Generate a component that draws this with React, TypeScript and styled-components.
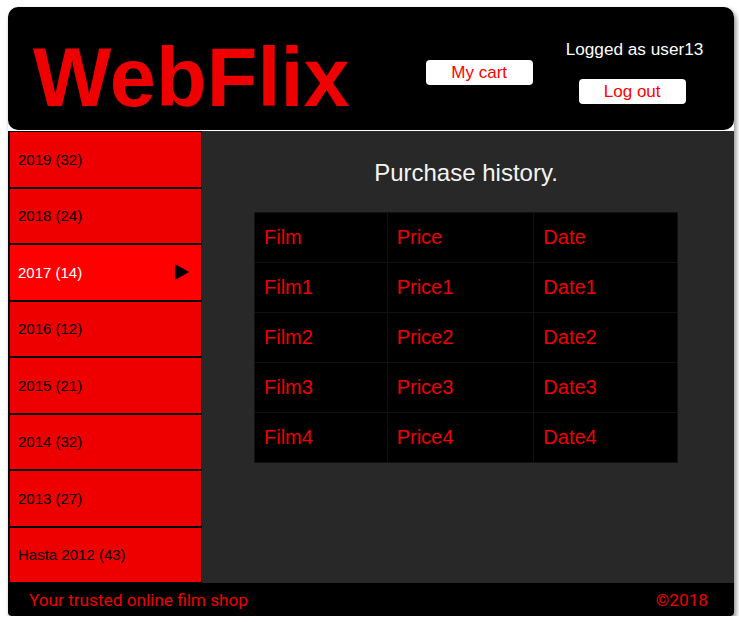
import React from "react";
import styled, { createGlobalStyle } from "styled-components";

const GlobalStyle = createGlobalStyle`
  body {
    margin: 0;
    background: #ffffff;
    font-family: "Liberation Sans", Arial, sans-serif;
  }
`;

const PageBox = styled.div`
  width: 726px;
  margin: 7px 0 0 8px;
  box-shadow: 2px 3px 5px rgba(0, 0, 0, 0.45);
  border-radius: 10px 10px 4px 4px;
`;

const HeaderBox = styled.header`
  display: flex;
  align-items: flex-start;
  height: 123px;
  padding-left: 25px;
  background: #000;
  border-radius: 10px;
  box-sizing: border-box;
`;

const Logo = styled.h1`
  margin: 30px 0 0;
  font-size: 83px;
  line-height: 82px;
  font-weight: 700;
  color: #ee0000;
`;

const WhiteButton = styled.button<{ $offset: number; $top: number }>`
  width: 107px;
  height: 25px;
  margin-left: ${(p) => p.$offset}px;
  margin-top: ${(p) => p.$top}px;
  padding: 0;
  border: none;
  border-radius: 4px;
  background: #fff;
  color: #ff0000;
  font-family: "Liberation Sans", Arial, sans-serif;
  font-size: 17px;
  line-height: 25px;
`;

const UserBox = styled.div`
  display: flex;
  flex-direction: column;
  align-items: flex-start;
  width: 138px;
  margin: 32px 0 0 33px;
  gap: 20px;
`;

const UserText = styled.span`
  color: #fff;
  font-size: 17.2px;
  line-height: 20px;
  white-space: nowrap;
`;

const BodyBox = styled.div`
  display: flex;
  height: 452px;
  margin-top: 1px;
`;

const Sidebar = styled.nav`
  display: flex;
  flex-direction: column;
  width: 194px;
  border-left: 1px solid #000;
  box-sizing: border-box;
`;

const YearItem = styled.div<{ $active?: boolean }>`
  flex: 1;
  display: flex;
  align-items: center;
  justify-content: space-between;
  padding: 0 12px 0 8px;
  border: 1px solid #000;
  background: ${(p) => (p.$active ? "#ff0000" : "#ee0000")};
  color: ${(p) => (p.$active ? "#fff" : "#000")};
  font-size: 15px;
`;

const Arrow = styled.span`
  width: 0;
  height: 0;
  border-top: 8px solid transparent;
  border-bottom: 8px solid transparent;
  border-left: 14px solid #000;
`;

const MainBox = styled.main`
  flex: 1;
  display: flex;
  flex-direction: column;
  align-items: center;
  padding: 28px 4px 0 0;
  background: #282828;
`;

const Title = styled.h2`
  margin: 0 0 25px;
  font-size: 24px;
  line-height: 28px;
  font-weight: 400;
  color: #f4f4f4;
`;

const HistoryTable = styled.table`
  width: 424px;
  border-collapse: collapse;
  background: #000;
  border: 1px solid #1c1c1c;
`;

const Cell = styled.td<{ $width: number }>`
  width: ${(p) => p.$width}px;
  height: 50px;
  padding: 0 0 0 9px;
  border: 1px solid #121212;
  color: #ee0000;
  font-size: 20px;
  box-sizing: border-box;
`;

const FooterBox = styled.footer`
  display: flex;
  align-items: center;
  justify-content: space-between;
  height: 33px;
  padding: 0 26px 0 21px;
  background: #000;
  border-radius: 0 0 4px 4px;
  color: #ee0000;
  font-family: Roboto, "Liberation Sans", sans-serif;
  font-size: 17.2px;
`;

const years = [
  { label: "2019 (32)" },
  { label: "2018 (24)" },
  { label: "2017 (14)", active: true },
  { label: "2016 (12)" },
  { label: "2015 (21)" },
  { label: "2014 (32)" },
  { label: "2013 (27)" },
  { label: "Hasta 2012 (43)" },
];

const rows = [
  ["Film", "Price", "Date"],
  ["Film1", "Price1", "Date1"],
  ["Film2", "Price2", "Date2"],
  ["Film3", "Price3", "Date3"],
  ["Film4", "Price4", "Date4"],
];

const widths = [133, 147, 144];

export default function App() {
  return (
    <PageBox>
      <GlobalStyle />
      <HeaderBox>
        <Logo>WebFlix</Logo>
        <WhiteButton $offset={76} $top={53}>
          My cart
        </WhiteButton>
        <UserBox>
          <UserText>Logged as user13</UserText>
          <WhiteButton $offset={13} $top={0}>
            Log out
          </WhiteButton>
        </UserBox>
      </HeaderBox>
      <BodyBox>
        <Sidebar>
          {years.map((y) => (
            <YearItem key={y.label} $active={y.active}>
              {y.label}
              {y.active && <Arrow />}
            </YearItem>
          ))}
        </Sidebar>
        <MainBox>
          <Title>Purchase history.</Title>
          <HistoryTable>
            <tbody>
              {rows.map((r, i) => (
                <tr key={i}>
                  {r.map((c, j) => (
                    <Cell key={c} $width={widths[j]}>
                      {c}
                    </Cell>
                  ))}
                </tr>
              ))}
            </tbody>
          </HistoryTable>
        </MainBox>
      </BodyBox>
      <FooterBox>
        <span>Your trusted online film shop</span>
        <span>©2018</span>
      </FooterBox>
    </PageBox>
  );
}
